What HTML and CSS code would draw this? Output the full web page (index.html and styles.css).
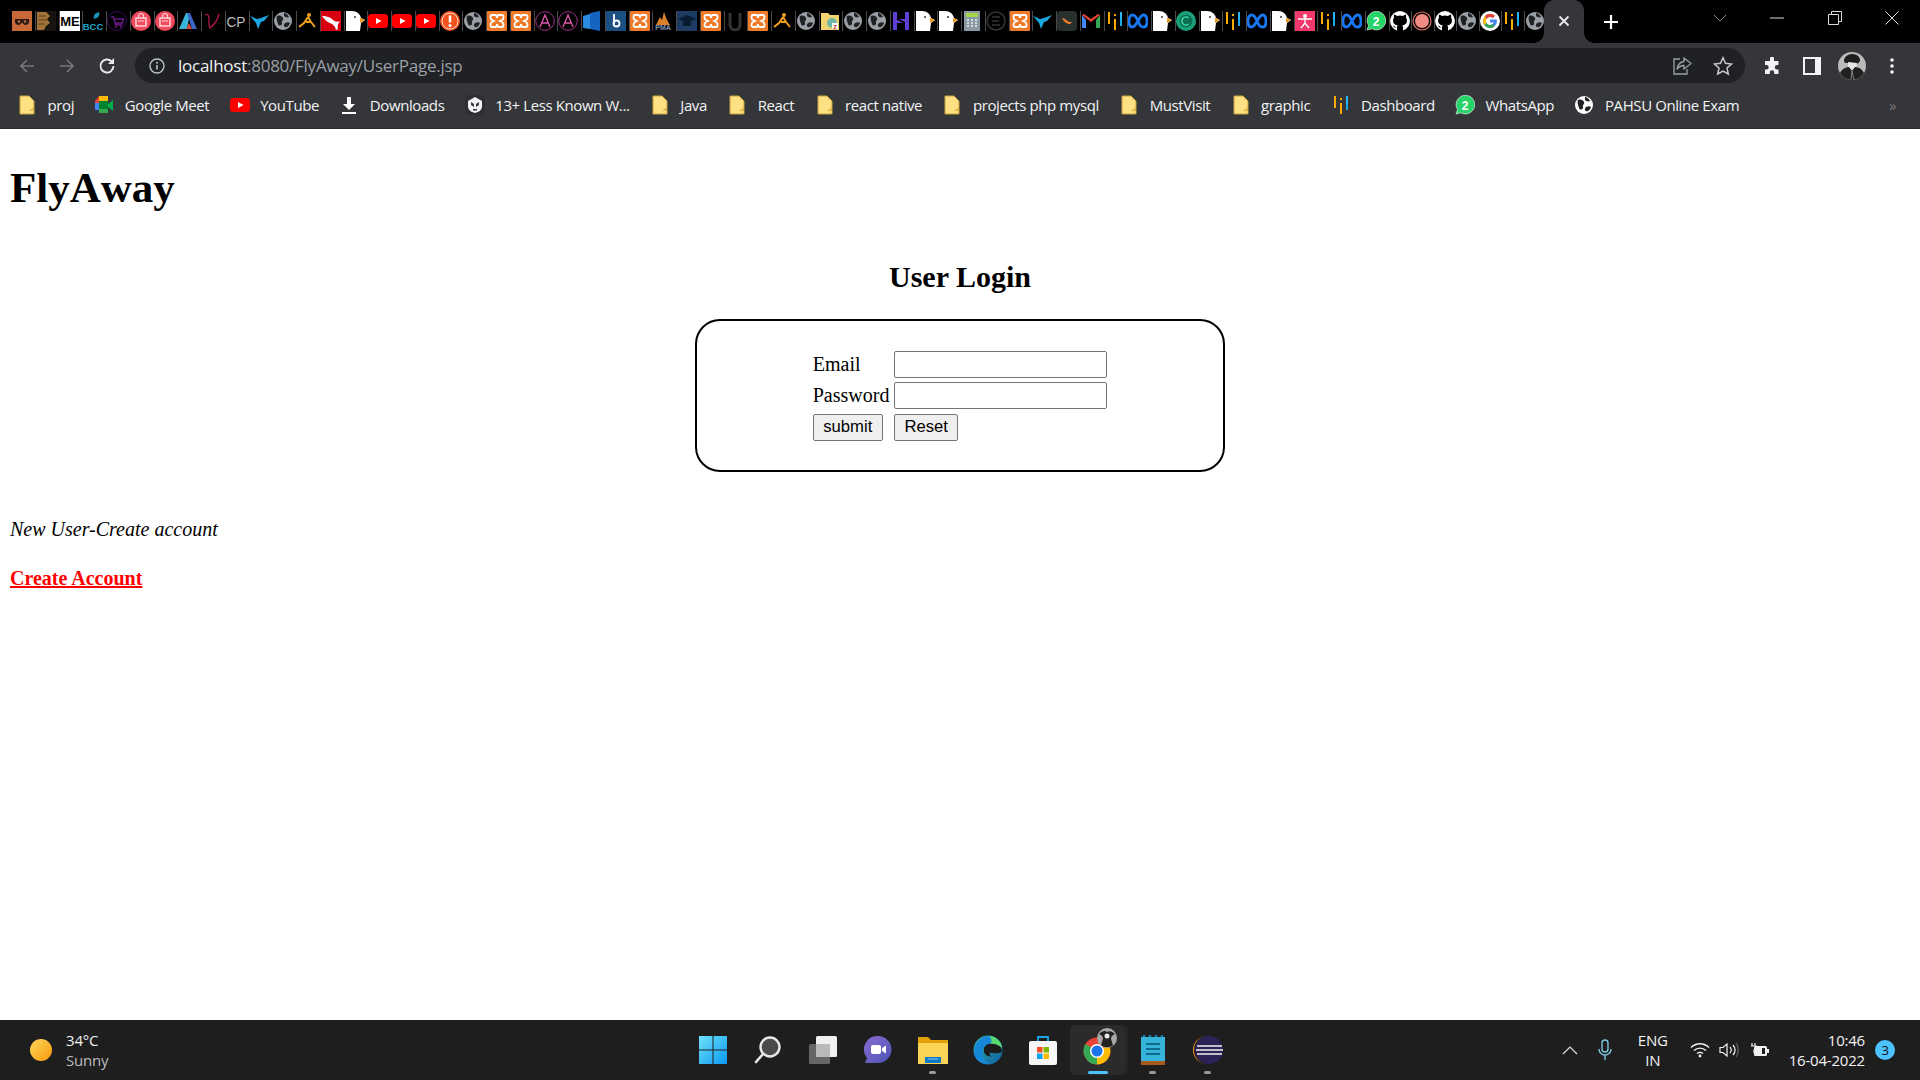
FILE: index.html
```html
<!DOCTYPE html>
<html lang="en">
<head>
<meta charset="utf-8">
<title>FlyAway</title>
<link rel="stylesheet" href="styles.css">
</head>
<body>
<svg class="defs" width="0" height="0" aria-hidden="true">
  <symbol id="mask" viewBox="0 0 20 20"><rect width="20" height="20" fill="#c8693a"/><path d="M3 8h14v3c0 2-2 3-3.500 3-2 0-2-2-3.500-2s-1.500 2-3.500 2C5 14 3 13 3 11z" fill="#2a1a12"/><circle cx="7" cy="10.500" r="1.300" fill="#c8693a"/><circle cx="13" cy="10.500" r="1.300" fill="#c8693a"/></symbol>
  <symbol id="brown" viewBox="0 0 20 20"><rect width="20" height="20" fill="#17130f"/><path d="M1 1h9l4 4-3 3 3 4-4 3-2 4H1z" fill="#a2743a"/><path d="M3 5h7M2 9h9M2 13h7" stroke="#5d4320"/></symbol>
  <symbol id="cart" viewBox="0 0 20 20"><circle cx="10" cy="10" r="9.500" fill="none" stroke="#3d0a5c"/><path d="M4 6h2.500l2 8h7M7 8h9.500l-1 4H8" fill="none" stroke="#6a1b8c" stroke-width="1.300"/><circle cx="9" cy="16" r="1" fill="#6a1b8c"/><circle cx="14" cy="16" r="1" fill="#6a1b8c"/></symbol>
  <symbol id="bag" viewBox="0 0 20 20"><circle cx="10" cy="10" r="10" fill="#f04a5f"/><path d="M5 7h10v8H5z" fill="none" stroke="#ffd5d8" stroke-width="1.500"/><path d="M7.500 7V5a2.500 2.500 0 0 1 5 0v2M7 10h6" fill="none" stroke="#ffd5d8" stroke-width="1.200"/></symbol>
  <symbol id="abl" viewBox="0 0 20 20"><path d="M1 18L8 2h4l-3 16z" fill="#38b6d8"/><path d="M9 2h3l7 16h-5z" fill="#3a66c8"/><path d="M8 18l3-6 3 6z" fill="#d8483c"/></symbol>
  <symbol id="vee" viewBox="0 0 20 20"><path d="M3 4c3-2 4 1 4 5 0 3 0 6 1 8 4-3 8-9 9-14" fill="none" stroke="#a9144f" stroke-width="1.400"/></symbol>
  <symbol id="bird" viewBox="0 0 20 20"><path d="M0 5l7 3 4-1 8-3-5 6-3 1-3 7-2-6z" fill="#1ba6e0"/></symbol>
  <symbol id="globe" viewBox="0 0 20 20"><circle cx="10" cy="10" r="9" fill="#9aa0a6"/><path d="M4 5c3-1 5 0 6 2s-2 3-1 5-3 4-4 1-2-6-1-8zM12 12c2-1 4-1 5 0-1 3-3 5-5 4s-1-3 0-4z" fill="#202124"/><path d="M11 2c2 0 4 2 5 4-2 1-4 0-5-1z" fill="#202124"/></symbol>
  <symbol id="figure" viewBox="0 0 20 20"><circle cx="12" cy="4" r="2" fill="#f0a020"/><path d="M11 6L7 12 2 16M11 6l3 5 4 5M9 11l5 0" fill="none" stroke="#f0a020" stroke-width="2"/></symbol>
  <symbol id="puma" viewBox="0 0 20 20"><rect width="20" height="20" fill="#d8000f"/><path d="M1 5c5 0 8 1 11 4 2 2 5 2 7 1-1 2-3 3-2 8l-2 1c-1-4-3-6-6-7C6 11 3 8 1 5z" fill="#fff"/></symbol>
  <symbol id="duck" viewBox="0 0 20 20"><path d="M1 0h6c5 0 8 3 9 7l4 2-4 3-1 8H1z" fill="#fff"/><path d="M15 7l5 2-5 3z" fill="#e89a20"/><circle cx="10" cy="6" r="1" fill="#333"/></symbol>
  <symbol id="yt" viewBox="0 0 20 20"><rect y="3" width="20" height="14" rx="3.500" fill="#f00"/><path d="M8 7l5.500 3L8 13z" fill="#fff"/></symbol>
  <symbol id="alert" viewBox="0 0 20 20"><circle cx="10" cy="10" r="10" fill="#f4511e"/><circle cx="10" cy="10" r="8" fill="none" stroke="#fff" stroke-width=".8"/><path d="M10 4.500v7" stroke="#fff" stroke-width="2.500"/><circle cx="10" cy="14.500" r="1.500" fill="#fff"/></symbol>
  <symbol id="xampp" viewBox="0 0 20 20"><rect width="20" height="20" rx="1" fill="#ef7a2a"/><path d="M5 4h3c2 0 2 3 2 3s0-3 2-3h3c2 0 2 4 0 5l-2 1 2 1c2 1 2 5 0 5h-3c-2 0-2-3-2-3s0 3-2 3H5c-2 0-2-4 0-5l2-1-2-1C3 8 3 4 5 4z" fill="none" stroke="#fff" stroke-width="1.800"/></symbol>
  <symbol id="acircle" viewBox="0 0 20 20"><circle cx="10" cy="10" r="9.300" fill="none" stroke="#a03588"/><path d="M5 16L10 4l5 12M7 12h6" fill="none" stroke="#e05ab0" stroke-width="1.300"/></symbol>
  <symbol id="book" viewBox="0 0 20 20"><path d="M1 5l7-2v15l-7-1z" fill="#2a8ce0"/><path d="M8 2l10-2v20L8 18z" fill="#1565c0"/></symbol>
  <symbol id="bee" viewBox="0 0 20 20"><rect width="20" height="20" fill="#1b4f82"/><path d="M8 3v10" stroke="#fff" stroke-width="1.800"/><circle cx="10.500" cy="12.500" r="3" fill="none" stroke="#fff" stroke-width="1.800"/></symbol>
  <symbol id="grad" viewBox="0 0 20 20"><rect width="20" height="20" fill="#1c3c63"/><path d="M1 8l9-4 9 4-9 4z" fill="#0b1c30"/><path d="M6 11v4h8v-4" fill="#0b1c30"/></symbol>
  <symbol id="udark" viewBox="0 0 20 20"><path d="M5 2v12a5 5 0 0 0 10 0V2" fill="none" stroke="#333" stroke-width="3"/></symbol>
  <symbol id="hh" viewBox="0 0 20 20"><path d="M2 1h4v7h8V1h4v18h-4v-7H6v7H2z" fill="#5d3fd3"/><path d="M6 8l8 4" stroke="#000" stroke-width="1.500"/></symbol>
  <symbol id="calc" viewBox="0 0 20 20"><rect x="2" width="16" height="20" fill="#8a9aa5"/><rect x="4" y="2" width="12" height="4" fill="#a8d44a"/><path d="M5 9h2M9 9h2M13 9h2M5 12h2M9 12h2M13 12h2M5 15h2M9 15h2M13 15h2" stroke="#eee" stroke-width="1.600"/></symbol>
  <symbol id="edark" viewBox="0 0 20 20"><circle cx="10" cy="10" r="9" fill="none" stroke="#333" stroke-width="1.600"/><path d="M6 6h8M6 10h7M6 14h8" stroke="#333" stroke-width="1.600"/></symbol>
  <symbol id="fox" viewBox="0 0 20 20"><rect width="20" height="20" rx="4" fill="#27302c"/><path d="M5 7c3 0 5 3 7 4l3 0-2 2c-3 0-6-2-8-6z" fill="#f08030"/></symbol>
  <symbol id="gmail" viewBox="0 0 20 20"><path d="M1 4v13h4V9z" fill="#4285f4"/><path d="M15 9v8h4V4z" fill="#34a853"/><path d="M1 4l9 7 9-7-2-1-7 5-7-5z" fill="#ea4335"/></symbol>
  <symbol id="dash" viewBox="0 0 20 20"><path d="M4 1v12M10 8v11M16 1v13" stroke="#f9ab00" stroke-width="2"/><path d="M16 8v7" stroke="#1ea7e0" stroke-width="2"/><path d="M10 3v2" stroke="#f9ab00" stroke-width="2"/><path d="M16 1v8" stroke="#29b6f6" stroke-width="2"/></symbol>
  <symbol id="meta" viewBox="0 0 20 20"><path d="M10 10C8 5 6 4 4.500 4 2 4 1 7 1 10.500S2 16 4.500 16C7 16 8 13 10 10s3-6 5.500-6S19 7 19 10.500 18 16 15.500 16C13 16 12 15 10 10z" fill="none" stroke="#1877f2" stroke-width="2.800"/></symbol>
  <symbol id="greenc" viewBox="0 0 20 20"><circle cx="10" cy="10" r="10" fill="#1aa37a"/><circle cx="10" cy="10" r="6.500" fill="#0d6d52"/><path d="M12.500 7a4 4 0 1 0 0 6" fill="none" stroke="#3ee0a8" stroke-width="1.500"/></symbol>
  <symbol id="pink" viewBox="0 0 20 20"><rect width="20" height="20" fill="#f0386b"/><circle cx="10" cy="5" r="2" fill="#fff"/><path d="M3 8h14M10 7v5M10 12l-4 5M10 12l4 5" stroke="#fff" stroke-width="1.300"/></symbol>
  <symbol id="wabubble" viewBox="0 0 20 20"><path d="M1 19l1.500-4.500A9.300 9.300 0 1 1 6 17.800z" fill="#25d366" stroke="#fff" stroke-width=".6"/></symbol>
  <symbol id="gh" viewBox="0 0 20 20"><path d="M10 0a10 10 0 0 0-3 19.500v-3c-3 .5-3.500-1-4-2 1 0 2 1 3 2h1c0-1 0-1.500 1-2-3-.5-5-2-5-5 0-1 .5-2 1-3-.5-1 0-2 0-3 1 0 2 .5 3 1.500a9 9 0 0 1 6 0c1-1 2-1.500 3-1.500 0 1 .5 2 0 3 .5 1 1 2 1 3 0 3-2 4.500-5 5 1 .5 1 1.500 1 2v3A10 10 0 0 0 10 0z" fill="#fff"/></symbol>
  <symbol id="rec" viewBox="0 0 20 20"><circle cx="10" cy="10" r="9" fill="none" stroke="#e8776b" stroke-width="1.200"/><circle cx="10" cy="10" r="7" fill="#f28b82"/></symbol>
  <symbol id="goog" viewBox="0 0 20 20"><circle cx="10" cy="10" r="10" fill="#fff"/><path d="M16.500 8.500H10v3h3.700a4 4 0 1 1-1-4.300l2.200-2.200A7 7 0 1 0 17 10c0-.5 0-1-.5-1.500z" fill="#4285f4"/><path d="M5 5a7 7 0 0 1 10-.2l-2.200 2.200A4 4 0 0 0 6.500 8z" fill="#ea4335"/><path d="M3 10c0-2 .8-3.500 2-5l1.500 3a4 4 0 0 0 0 4L4.500 14.500C3.500 13 3 11.500 3 10z" fill="#fbbc05"/><path d="M4.500 14.500l2-2.500a4 4 0 0 0 6 1l2.200 2.200a7 7 0 0 1-10.200-.7z" fill="#34a853"/></symbol>
  <symbol id="folder" viewBox="0 0 20 20"><path d="M3 1h9l5 5v13H3z" fill="#ffe083" stroke="#c9a23c"/><path d="M12 16l5-4v4z" fill="#e0b84a"/></symbol>
  <symbol id="gmeet" viewBox="0 0 20 20"><path d="M1 6l4-5v7H1z" fill="#ea4335"/><path d="M5 1h9v5L5 6z" fill="#fbbc05"/><path d="M1 8h4v7H2a1 1 0 0 1-1-1z" fill="#4285f4"/><path d="M5 14h9v4H5z" fill="#34a853"/><path d="M5 6h9v8H5z" fill="#00832d"/><path d="M14 9l5-4v11l-5-4z" fill="#00ac47"/></symbol>
  <symbol id="download" viewBox="0 0 20 20"><path d="M8 2h4v7h4l-6 6-6-6h4zM3 17h14v2H3z" fill="#fff"/></symbol>
  <symbol id="lessk" viewBox="0 0 20 20"><rect width="20" height="20" rx="4" fill="#2e2f32"/><path d="M10 2l7 4v5c0 4-3 6-7 7-4-1-7-3-7-7V6z" fill="#f1f3f4"/><path d="M6 7l3 2v3L6 10zM14 7l-3 2v3l3-2zM8 14h4v1.500H8z" fill="#35363a"/></symbol>
  <symbol id="globew" viewBox="0 0 20 20"><circle cx="10" cy="10" r="9" fill="#fff"/><path d="M4 5c3-1 5 0 6 2s-2 3-1 5-3 4-4 1-2-6-1-8zM12 12c2-1 4-1 5 0-1 3-3 5-5 4s-1-3 0-4zM11 2c2 0 4 2 5 4-2 1-4 0-5-1z" fill="#202124"/></symbol>
</svg>

<div class="tabstrip">
  <div class="favs">
    <span class="fav"><svg><use href="#mask"/></svg></span>
    <span class="fav"><svg><use href="#brown"/></svg></span>
    <span class="fav"><svg viewBox="0 0 20 20"><rect width="20" height="20" fill="#fff"/><text x="10" y="15" text-anchor="middle" class="fav-text" font-size="13" font-weight="700" fill="#000">ME</text></svg></span>
    <span class="fav"><svg viewBox="0 0 20 20"><path d="M11 8c-1-4 1-6 5-7 1 4-1 6-5 7z" fill="#1595b5"/><text x="10" y="19" text-anchor="middle" class="fav-text" font-size="9.500" font-weight="700" fill="#20a5c8">BCC</text></svg></span>
    <span class="fav"><svg><use href="#cart"/></svg></span>
    <span class="fav"><svg><use href="#bag"/></svg></span>
    <span class="fav"><svg><use href="#bag"/></svg></span>
    <span class="fav"><svg><use href="#abl"/></svg></span>
    <span class="fav"><svg><use href="#vee"/></svg></span>
    <span class="fav"><svg viewBox="0 0 20 20"><text x="10" y="16" text-anchor="middle" class="fav-text" font-size="15" fill="#bdbdbd" textLength="19" lengthAdjust="spacingAndGlyphs">CP</text></svg></span>
    <span class="fav"><svg><use href="#bird"/></svg></span>
    <span class="fav"><svg><use href="#globe"/></svg></span>
    <span class="fav"><svg><use href="#figure"/></svg></span>
    <span class="fav"><svg><use href="#puma"/></svg></span>
    <span class="fav"><svg><use href="#duck"/></svg></span>
    <span class="fav"><svg><use href="#yt"/></svg></span>
    <span class="fav"><svg><use href="#yt"/></svg></span>
    <span class="fav"><svg><use href="#yt"/></svg></span>
    <span class="fav"><svg><use href="#alert"/></svg></span>
    <span class="fav"><svg><use href="#globe"/></svg></span>
    <span class="fav"><svg><use href="#xampp"/></svg></span>
    <span class="fav"><svg><use href="#xampp"/></svg></span>
    <span class="fav"><svg><use href="#acircle"/></svg></span>
    <span class="fav"><svg><use href="#acircle"/></svg></span>
    <span class="fav"><svg><use href="#book"/></svg></span>
    <span class="fav"><svg><use href="#bee"/></svg></span>
    <span class="fav"><svg><use href="#xampp"/></svg></span>
    <span class="fav"><svg viewBox="0 0 20 20"><path d="M3 14l4-8 2 3 2-8 3 8 3 5z" fill="#d9822b"/><text x="10" y="19" text-anchor="middle" class="fav-text" font-size="7" font-weight="700" fill="#7f93b8">PMA</text></svg></span>
    <span class="fav"><svg><use href="#grad"/></svg></span>
    <span class="fav"><svg><use href="#xampp"/></svg></span>
    <span class="fav"><svg><use href="#udark"/></svg></span>
    <span class="fav"><svg><use href="#xampp"/></svg></span>
    <span class="fav"><svg><use href="#figure"/></svg></span>
    <span class="fav"><svg><use href="#globe"/></svg></span>
    <span class="fav"><svg viewBox="0 0 20 20"><path d="M1 2h7l2 2h9v15H1z" fill="#f4d371"/><circle cx="12" cy="12" r="5" fill="#6fb8a8"/><rect x="12" y="12" width="6" height="6" fill="#fff"/><text x="15" y="17.500" text-anchor="middle" class="fav-text" font-size="6" font-weight="700" fill="#c02020">Z</text></svg></span>
    <span class="fav"><svg><use href="#globe"/></svg></span>
    <span class="fav"><svg><use href="#globe"/></svg></span>
    <span class="fav"><svg><use href="#hh"/></svg></span>
    <span class="fav"><svg><use href="#duck"/></svg></span>
    <span class="fav"><svg><use href="#duck"/></svg></span>
    <span class="fav"><svg><use href="#calc"/></svg></span>
    <span class="fav"><svg><use href="#edark"/></svg></span>
    <span class="fav"><svg><use href="#xampp"/></svg></span>
    <span class="fav"><svg><use href="#bird"/></svg></span>
    <span class="fav"><svg><use href="#fox"/></svg></span>
    <span class="fav"><svg><use href="#gmail"/></svg></span>
    <span class="fav"><svg><use href="#dash"/></svg></span>
    <span class="fav"><svg><use href="#meta"/></svg></span>
    <span class="fav"><svg><use href="#duck"/></svg></span>
    <span class="fav"><svg><use href="#greenc"/></svg></span>
    <span class="fav"><svg><use href="#duck"/></svg></span>
    <span class="fav"><svg><use href="#dash"/></svg></span>
    <span class="fav"><svg><use href="#meta"/></svg></span>
    <span class="fav"><svg><use href="#duck"/></svg></span>
    <span class="fav"><svg><use href="#pink"/></svg></span>
    <span class="fav"><svg><use href="#dash"/></svg></span>
    <span class="fav"><svg><use href="#meta"/></svg></span>
    <span class="fav"><svg viewBox="0 0 20 20"><use href="#wabubble"/><text x="10" y="14.500" text-anchor="middle" class="fav-text" font-size="12" font-weight="700" fill="#fff">2</text></svg></span>
    <span class="fav fav-n"><svg><use href="#gh"/></svg></span>
    <span class="fav fav-n"><svg><use href="#rec"/></svg></span>
    <span class="fav fav-n"><svg><use href="#gh"/></svg></span>
    <span class="fav fav-n"><svg><use href="#globe"/></svg></span>
    <span class="fav fav-n"><svg><use href="#goog"/></svg></span>
    <span class="fav fav-n"><svg><use href="#dash"/></svg></span>
    <span class="fav fav-n fav-last"><svg><use href="#globe"/></svg></span>
  </div>
  <div class="active-tab">
    <svg class="ico-14" viewBox="0 0 14 14"><path d="M2.500 2.500l9 9M11.500 2.500l-9 9" stroke="#e8eaed" stroke-width="1.800"/></svg>
  </div>
  <div class="newtab">
    <svg class="ico-18" viewBox="0 0 18 18"><path d="M9 2v14M2 9h14" stroke="#fff" stroke-width="2.200"/></svg>
  </div>
  <div class="winctl">
    <svg class="ctl ctl-chev" viewBox="0 0 14 14"><path d="M1 4l6 6 6-6" fill="none" stroke="#8a8a8a"/></svg>
    <svg class="ctl" viewBox="0 0 14 14"><path d="M0 7h14" stroke="#dcdcdc"/></svg>
    <svg class="ctl" viewBox="0 0 14 14"><path d="M.5 3.500h10v10H.5zM3.500 3.500v-3h10v10h-3" fill="none" stroke="#dcdcdc"/></svg>
    <svg class="ctl" viewBox="0 0 14 14"><path d="M.5.500l13 13M13.500.500l-13 13" stroke="#dcdcdc"/></svg>
  </div>
</div>

<div class="toolbar">
  <div class="navbtn"><svg class="ico-18" viewBox="0 0 18 18"><path d="M16 9H3M9 3L3 9l6 6" fill="none" stroke="#75777a" stroke-width="1.700"/></svg></div>
  <div class="navbtn"><svg class="ico-18" viewBox="0 0 18 18"><path d="M2 9h13M9 3l6 6-6 6" fill="none" stroke="#75777a" stroke-width="1.700"/></svg></div>
  <div class="navbtn"><svg class="ico-18" viewBox="0 0 18 18"><path d="M15.500 9a6.500 6.500 0 1 1-2-4.700" fill="none" stroke="#e8eaed" stroke-width="1.900"/><path d="M16 1v6h-6z" fill="#e8eaed"/></svg></div>
  <div class="omnibox">
    <svg class="ico-16" viewBox="0 0 16 16"><circle cx="8" cy="8" r="7" fill="none" stroke="#bdc1c6" stroke-width="1.400"/><path d="M8 7v4.500" stroke="#bdc1c6" stroke-width="1.600"/><circle cx="8" cy="4.800" r="1" fill="#bdc1c6"/></svg>
    <div class="url"><span class="url-host">localhost</span>:8080/FlyAway/UserPage.jsp</div>
    <svg class="omni-share" viewBox="0 0 20 20"><path d="M8 3H2v15h13v-5" fill="none" stroke="#9aa0a6" stroke-width="1.300"/><path d="M12 2l7 5.500-7 5.500V9.500c-3 0-5 1-7 4 .5-4 3-7.500 7-8z" fill="none" stroke="#9aa0a6" stroke-width="1.300"/></svg>
    <svg class="omni-star" viewBox="0 0 20 20"><path d="M10 1.800l2.500 5.500 6 .7-4.500 4 1.300 6L10 15l-5.300 3 1.300-6-4.500-4 6-.7z" fill="none" stroke="#c4c7c5" stroke-width="1.500"/></svg>
  </div>
  <div class="tools">
    <div class="navbtn"><svg class="ico-18" viewBox="0 0 18 18"><path d="M7 1.500a2 2 0 0 1 4 0V4h4.500v4H14a2.200 2.200 0 0 0 0 4.400h1.500V17h-4.300v-1.500a2.200 2.200 0 0 0-4.400 0V17H2v-4.500h1.500a2.200 2.200 0 0 0 0-4.400H2V4h5z" fill="#f1f3f4"/></svg></div>
    <div class="navbtn"><svg class="ico-18" viewBox="0 0 18 18"><path d="M1 1h16v16H1z" fill="none" stroke="#f1f3f4" stroke-width="2"/><path d="M12 1h5v16h-5z" fill="#f1f3f4"/></svg></div>
    <div class="navbtn"><svg class="avatar" viewBox="0 0 28 28"><circle cx="14" cy="14" r="14" fill="#b9b9b9"/><path d="M6 9c0-4 4-7 8-7 5 0 8 3 8 6 0 2-2 3-3 4l-9-1C8 11 6 11 6 9z" fill="#1d1d1d"/><path d="M10 10l9 1-1 5-4 2-4-3z" fill="#e6e6e6"/><path d="M2 21c2-4 6-6 9-6l3 4 3-4c4 0 7 2 9 6-3 5-8 7-12 7s-9-2-12-7z" fill="#202020"/><path d="M14 19l-1 9M14 19l2 9" stroke="#9a9a9a" stroke-width=".8"/></svg></div>
    <div class="navbtn"><svg class="ico-18" viewBox="0 0 18 18"><circle cx="9" cy="3" r="1.800" fill="#f1f3f4"/><circle cx="9" cy="9" r="1.800" fill="#f1f3f4"/><circle cx="9" cy="15" r="1.800" fill="#f1f3f4"/></svg></div>
  </div>
</div>

<div class="bookmarks">
  <div class="bm"><svg class="bm-ico"><use href="#folder"/></svg>proj</div>
  <div class="bm"><svg class="bm-ico"><use href="#gmeet"/></svg>Google Meet</div>
  <div class="bm"><svg class="bm-ico"><use href="#yt"/></svg>YouTube</div>
  <div class="bm"><svg class="bm-ico"><use href="#download"/></svg>Downloads</div>
  <div class="bm"><svg class="bm-ico"><use href="#lessk"/></svg>13+ Less Known W...</div>
  <div class="bm"><svg class="bm-ico"><use href="#folder"/></svg>Java</div>
  <div class="bm"><svg class="bm-ico"><use href="#folder"/></svg>React</div>
  <div class="bm"><svg class="bm-ico"><use href="#folder"/></svg>react native</div>
  <div class="bm"><svg class="bm-ico"><use href="#folder"/></svg>projects php mysql</div>
  <div class="bm"><svg class="bm-ico"><use href="#folder"/></svg>MustVisit</div>
  <div class="bm"><svg class="bm-ico"><use href="#folder"/></svg>graphic</div>
  <div class="bm"><svg class="bm-ico"><use href="#dash"/></svg>Dashboard</div>
  <div class="bm"><svg class="bm-ico" viewBox="0 0 20 20"><use href="#wabubble"/><text x="10" y="14.500" text-anchor="middle" class="fav-text" font-size="12" font-weight="700" fill="#fff">2</text></svg>WhatsApp</div>
  <div class="bm"><svg class="bm-ico"><use href="#globew"/></svg>PAHSU Online Exam</div>
  <div class="bm-more">»</div>
</div>

<main class="page">
  <h1 class="site-title">FlyAway</h1>
  <h2 class="login-title">User Login</h2>
  <form class="login-box">
    <table class="login-table">
      <tr><td>Email</td><td><input class="field" type="text"></td></tr>
      <tr><td>Password</td><td><input class="field" type="password"></td></tr>
      <tr><td><button class="btn" type="button">submit</button></td><td><button class="btn" type="button">Reset</button></td></tr>
    </table>
  </form>
  <p class="new-user">New User-Create account</p>
  <p class="create"><a href="#">Create Account</a></p>
</main>

<footer class="taskbar">
  <div class="weather">
    <span class="sun"></span>
    <div class="weather-text"><div>34°C</div><div class="dim">Sunny</div></div>
  </div>
  <div class="tb-center">
    <div class="tb-app"><svg class="tb-ico" viewBox="0 0 30 30"><defs><linearGradient id="w" x1="0" y1="0" x2="1" y2="1"><stop offset="0" stop-color="#6fe0fb"/><stop offset="1" stop-color="#0a9aef"/></linearGradient></defs><path d="M1 1h13.500v13.500H1zM15.500 1H29v13.500H15.500zM1 15.500h13.500V29H1zM15.500 15.500H29V29H15.500z" fill="url(#w)"/></svg></div>
    <div class="tb-app"><svg class="tb-ico" viewBox="0 0 30 30"><circle cx="17" cy="12" r="9.500" fill="#4b4b4b" stroke="#e8e8e8" stroke-width="2.400"/><path d="M10 19l-7 8" stroke="#e8e8e8" stroke-width="2.600" stroke-linecap="round"/></svg></div>
    <div class="tb-app"><svg class="tb-ico" viewBox="0 0 30 30"><rect x="8" y="1" width="21" height="21" rx="1.500" fill="#f0f0f0"/><rect x="1" y="9" width="21" height="20" rx="1.500" fill="#6d6d6d" fill-opacity=".9"/><rect x="8" y="9" width="14" height="13" fill="#b9b9b9"/></svg></div>
    <div class="tb-app"><svg class="tb-ico" viewBox="0 0 30 30"><defs><linearGradient id="t" x1="0" y1="0" x2="1" y2="1"><stop offset="0" stop-color="#8d6ad0"/><stop offset="1" stop-color="#4a55b5"/></linearGradient></defs><path d="M15 1a13.500 13.500 0 0 1 0 27H2l2-5A13.500 13.500 0 0 1 15 1z" fill="url(#t)"/><rect x="8" y="10" width="10" height="9" rx="2" fill="#fff"/><path d="M19 13l4-2.500v8L19 16z" fill="#fff"/></svg></div>
    <div class="tb-app has-dot"><svg class="tb-ico" viewBox="0 0 30 30"><path d="M0 2h10l3 3h17v24H0z" fill="#e3a20a"/><path d="M0 8h30v21H0z" fill="#fcd455"/><path d="M7 22h16v6H7z" fill="#1178c8"/><path d="M10 24h10" stroke="#8cc8f0"/></svg></div>
    <div class="tb-app"><svg class="tb-ico" viewBox="0 0 30 30"><defs><linearGradient id="e" x1="0" y1="0" x2="1" y2="1"><stop offset="0" stop-color="#35c1a0"/><stop offset="1" stop-color="#0c59a4"/></linearGradient></defs><circle cx="15" cy="15" r="14.500" fill="url(#e)"/><path d="M29 17c0-7-6-10-12-9-5 1-7 5-6 9s7 6 11 3-1 1-3 1-3-2-2-3 5 2 12-1z" fill="#1c1c1c"/><path d="M1 15C2 7 9 1 16 1c7 0 13 6 13 12-5-6-13-6-17-2S8 24 16 29C8 30 0 24 1 15z" fill="#1688d8"/><path d="M16 1c7 0 13 6 13 12-3-3-8-5-12-4C20 6 18 3 16 1z" fill="#58d86f"/></svg></div>
    <div class="tb-app"><svg class="tb-ico" viewBox="0 0 30 30"><path d="M10 7V2h10v5" fill="none" stroke="#1aa7e8" stroke-width="1.800"/><rect x="1" y="6" width="28" height="24" rx="2" fill="#f6f6f6"/><rect x="9" y="12" width="5.500" height="5.500" fill="#f25022"/><rect x="15.500" y="12" width="5.500" height="5.500" fill="#7fba00"/><rect x="9" y="18.500" width="5.500" height="5.500" fill="#00a4ef"/><rect x="15.500" y="18.500" width="5.500" height="5.500" fill="#ffb900"/></svg></div>
    <div class="tb-app tb-active has-bar">
      <svg class="tb-ico" viewBox="0 0 30 30"><circle cx="14" cy="16" r="13.500" fill="#ea4335"/><path d="M14 16L26 10a13.500 13.500 0 0 1-12 19.500z" fill="#fbbc05"/><path d="M14 16L14 29.500A13.500 13.500 0 0 1 2.500 9z" fill="#34a853"/><circle cx="14" cy="16" r="7" fill="#fff"/><circle cx="14" cy="16" r="5.500" fill="#1a73e8"/></svg>
      <svg class="tb-profile" viewBox="0 0 20 20"><circle cx="10" cy="10" r="10" fill="#a8a8a8"/><path d="M2 6c3-3 6-4 8-2 3-2 6 0 8 2-2 1-4 2-4 5l2 6c-3 3-9 3-12 0l2-6c0-3-2-4-4-5z" fill="#222"/><circle cx="10" cy="8" r="2.500" fill="#e8e8e8"/></svg>
    </div>
    <div class="tb-app has-dot"><svg class="tb-ico" viewBox="0 0 30 30"><rect x="3" y="2" width="24" height="27" fill="#35b3d8"/><rect x="3" y="26" width="24" height="4" fill="#a85a1c"/><path d="M6 2V0M12 2V0M18 2V0M24 2V0" stroke="#1a7fb0" stroke-width="2.500"/><path d="M8 9h14M8 14h14M8 19h14" stroke="#0d6a8c" stroke-width="1.800"/></svg></div>
    <div class="tb-app has-dot"><svg class="tb-ico" viewBox="0 0 30 30"><circle cx="16" cy="15" r="14" fill="#2c2255"/><path d="M14 1A14 14 0 0 0 14 29 13 14 0 0 1 14 1z" fill="#f7941e"/><path d="M4 11h25M3 15h27M4 19h25" stroke="#f2f2f2" stroke-width="1.500"/></svg></div>
  </div>
  <div class="tray">
    <svg class="tray-chev" viewBox="0 0 16 10"><path d="M1 9l7-7 7 7" fill="none" stroke="#e0e0e0" stroke-width="1.200"/></svg>
    <svg class="tray-mic" viewBox="0 0 14 22"><rect x="4" y="1" width="6" height="12" rx="3" fill="none" stroke="#7ec6dd" stroke-width="1.400"/><path d="M1 10a6 6 0 0 0 12 0M7 16v5" fill="none" stroke="#7ec6dd" stroke-width="1.400"/></svg>
    <div class="lang"><div>ENG</div><div>IN</div></div>
    <svg class="tray-wifi" viewBox="0 0 20 16"><path d="M1 5.500c5-5 13-5 18 0M4 8.500c3.500-3.200 8.500-3.200 12 0M7 11.500c2-1.500 4-1.500 6 0" fill="none" stroke="#f2f2f2" stroke-width="1.400"/><circle cx="10" cy="14" r="1.400" fill="#f2f2f2"/></svg>
    <svg class="tray-vol" viewBox="0 0 20 16"><path d="M1 5.500h3l4-3.500v12l-4-3.500H1z" fill="none" stroke="#f2f2f2" stroke-width="1.200"/><path d="M11 5c1.500 1.800 1.500 4.200 0 6M14 3c2.500 3 2.500 7 0 10" fill="none" stroke="#f2f2f2" stroke-width="1.200"/><path d="M17 1c3 4 3 10 0 14" fill="none" stroke="#666" stroke-width="1.200"/></svg>
    <svg class="tray-bat" viewBox="0 0 20 16"><path d="M2 1v3M5 1v3M1 4h5v2L4 8v3" fill="none" stroke="#f2f2f2" stroke-width="1.200"/><rect x="4" y="4" width="13" height="10" rx="1.500" fill="#f2f2f2"/><rect x="17" y="7" width="2" height="4" fill="#f2f2f2"/><rect x="12" y="6" width="3" height="6" fill="#202020"/></svg>
    <div class="clock"><div>10:46</div><div>16-04-2022</div></div>
    <div class="badge">3</div>
  </div>
</footer>
</body>
</html>
```
FILE: styles.css
```css
* { box-sizing: border-box; }
html, body { margin: 0; padding: 0; height: 100%; }
body {
  width: 1920px;
  height: 1080px;
  overflow: hidden;
  display: flex;
  flex-direction: column;
  background: #fff;
  color: #000;
  font-family: "Liberation Serif", serif;
}
.defs { position: absolute; }
.fav-text { font-family: "Liberation Sans", sans-serif; }

/* tab strip */
.tabstrip {
  height: 43px;
  flex: none;
  background: #000;
  display: flex;
  align-items: stretch;
}
.favs {
  display: flex;
  align-items: center;
  padding-left: 12px;
  width: 1544px;
  padding-bottom: 1px;
}
.fav {
  flex: none;
  width: 23.75px;
  height: 20px;
  padding-right: 1.75px;
  border-right: 1px solid #4a4a4a;
  display: block;
}
.fav svg { display: block; width: 20px; height: 20px; }
.fav-n { width: 22.5px; }
.fav-last { border-right: 0; }
.active-tab {
  position: relative;
  width: 40px;
  background: #35363a;
  border-radius: 10px 10px 0 0;
  display: flex;
  align-items: center;
  justify-content: center;
  padding-bottom: 1px;
}
.active-tab::before,
.active-tab::after {
  content: "";
  position: absolute;
  bottom: 0;
  width: 10px;
  height: 10px;
  background: radial-gradient(circle at 0 0, #000 9.500px, #35363a 10px);
}
.active-tab::before { left: -10px; }
.active-tab::after { right: -10px; background: radial-gradient(circle at 100% 0, #000 9.500px, #35363a 10px); }
.ico-14 { width: 14px; height: 14px; display: block; }
.ico-16 { width: 16px; height: 16px; display: block; flex: none; }
.ico-18 { width: 18px; height: 18px; display: block; }
.newtab {
  width: 18px;
  margin-left: 18px;
  display: flex;
  align-items: center;
}
.winctl {
  flex: 1;
  display: flex;
  align-items: center;
  justify-content: flex-end;
  gap: 43.500px;
  padding: 0 21px 7px 0;
}
.ctl { width: 14px; height: 14px; display: block; }

/* toolbar */
.toolbar {
  height: 45px;
  flex: none;
  background: #35363a;
  display: flex;
  align-items: center;
  padding: 5px 8px 5px 7px;
}
.navbtn {
  width: 40px;
  flex: none;
  display: flex;
  align-items: center;
  justify-content: center;
}
.omnibox {
  flex: 1;
  height: 35px;
  margin: 0 7px 0 8px;
  background: #202124;
  border-radius: 18px;
  display: flex;
  align-items: center;
  padding-left: 14px;
}
.url {
  flex: 1;
  margin-left: 13px;
  font: 17px "Open Sans", sans-serif;
  letter-spacing: -.25px;
  color: #9aa0a6;
  white-space: nowrap;
}
.url-host { color: #f1f3f4; }
.omni-share { width: 20px; height: 20px; display: block; flex: none; }
.omni-star { width: 20px; height: 20px; display: block; flex: none; margin: 0 12px 0 21px; }
.tools { display: flex; }
.avatar { width: 28px; height: 28px; display: block; }

/* bookmarks */
.bookmarks {
  height: 41px;
  flex: none;
  background: #35363a;
  border-bottom: 1px solid #2a2b2e;
  display: flex;
  align-items: center;
  padding: 0 0 7px 17px;
  font: 15px "Open Sans", sans-serif;
  letter-spacing: -.4px;
  color: #f1f3f4;
  white-space: nowrap;
}
.bm { display: flex; align-items: center; gap: 10.500px; margin-right: 20.300px; }
.bm-ico { width: 20px; height: 20px; display: block; flex: none; }
.bm-more { margin-left: auto; margin-right: 24px; color: #777; }

/* page */
.page {
  flex: 1;
  padding: 36px 10px 0;
}
.site-title {
  margin: 0;
  font-size: 43px;
  line-height: 46px;
  font-weight: 700;
  font-kerning: none;
}
.login-title {
  margin: 49px 0 25px;
  font-size: 30px;
  line-height: 34px;
  font-weight: 700;
  text-align: center;
}
.login-box {
  width: 530px;
  height: 153px;
  margin: 0 auto;
  padding: 26.500px 0 0 112.500px;
  border: 2px solid #000;
  border-radius: 25px;
  font-size: 20px;
}
.login-table { border-spacing: 2.500px; border-collapse: separate; font-size: 20px; }
.login-table td { padding: 1.250px; }
.field {
  display: block;
  width: 213px;
  height: 27px;
  padding: 1px 2px;
  border: 1px solid #767676;
  border-radius: 2px;
  background: #fff;
}
.btn {
  display: block;
  height: 27px;
  padding: 1px 9.500px;
  border: 1px solid #767676;
  border-radius: 2px;
  background: #efefef;
  font: 16.670px "Liberation Sans", sans-serif;
  color: #000;
}
.new-user {
  margin: 46px 0 0;
  font-size: 20px;
  line-height: 23px;
  font-style: italic;
}
.create {
  margin: 26px 0 0;
  font-size: 20px;
  line-height: 23px;
  font-weight: 700;
}
.create a { color: #f00; text-decoration: underline; }

/* taskbar */
.taskbar {
  height: 60px;
  flex: none;
  background: #1e1e1e;
  color: #f2f2f2;
  font: 15px/20px "Open Sans", sans-serif;
  letter-spacing: -.2px;
  display: grid;
  grid-template-columns: 1fr auto 1fr;
  align-items: center;
}
.weather { display: flex; align-items: center; padding-left: 30px; gap: 14px; }
.sun {
  width: 22px;
  height: 22px;
  border-radius: 50%;
  background: linear-gradient(135deg, #ffd75e, #f79a0c);
}
.dim { color: #bdbdbd; }
.tb-center { display: flex; }
.tb-app {
  position: relative;
  width: 55px;
  height: 50px;
  display: flex;
  align-items: center;
  justify-content: center;
}
.tb-ico { width: 30px; height: 30px; display: block; }
.has-dot::after,
.has-bar::after {
  content: "";
  position: absolute;
  left: 50%;
  bottom: 1px;
  width: 7px;
  height: 3px;
  margin-left: -3.500px;
  border-radius: 2px;
  background: #9a9a9a;
}
.has-bar::after { width: 20px; margin-left: -10px; background: #4cc2ff; }
.tb-active {
  background: #2b2b2b;
  border-radius: 5px;
  box-shadow: 4px 0 0 -1px #262626;
}
.tb-profile { position: absolute; top: 3px; right: 8px; width: 20px; height: 20px; }
.tray { display: flex; align-items: center; justify-content: flex-end; padding-right: 25px; }
.tray svg { display: block; flex: none; }
.tray-chev { width: 16px; height: 10px; }
.tray-mic { width: 14px; height: 22px; margin-left: 20px; }
.lang { width: 40px; margin-left: 21px; text-align: center; }
.tray-wifi { width: 20px; height: 16px; margin-left: 17px; }
.tray-vol { width: 20px; height: 16px; margin-left: 9px; }
.tray-bat { width: 20px; height: 16px; margin-left: 11px; }
.clock { margin-left: 19px; text-align: right; }
.badge {
  width: 20px;
  height: 20px;
  margin-left: 10px;
  border-radius: 50%;
  background: #4cc2ff;
  color: #111;
  font-size: 13px;
  line-height: 20px;
  text-align: center;
}
```
